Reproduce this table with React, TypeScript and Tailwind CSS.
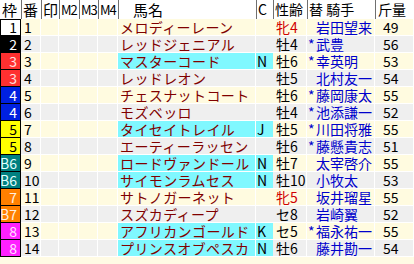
import React from 'react';

type Row = {
  waku: string;
  wc: string;
  num: number;
  name: string;
  c: string;
  sex: string;
  jockey: string;
  star: boolean;
  kg: string;
};

const WAKU: Record<string, string> = {
  white: 'bg-white text-black',
  black: 'bg-black text-white',
  red: 'bg-[#ff3030] text-[#ffe0e0]',
  blue: 'bg-[#0020e0] text-white',
  yellow: 'bg-[#ffff00] text-black',
  teal: 'bg-[#008080] text-[#e0ffff]',
  orange: 'bg-[#ff8000] text-[#fff0e0]',
  magenta: 'bg-[#ff20ff] text-[#ffe0ff]',
};

const rows: Row[] = [
  { waku: '1', wc: 'white', num: 1, name: 'メロディーレーン', c: '', sex: '牝4', jockey: '岩田望来', star: false, kg: '49' },
  { waku: '2', wc: 'black', num: 2, name: 'レッドジェニアル', c: '', sex: '牡4', jockey: '武豊', star: true, kg: '56' },
  { waku: '3', wc: 'red', num: 3, name: 'マスターコード', c: 'N', sex: '牡6', jockey: '幸英明', star: true, kg: '53' },
  { waku: '3', wc: 'red', num: 4, name: 'レッドレオン', c: '', sex: '牡5', jockey: '北村友一', star: false, kg: '54' },
  { waku: '4', wc: 'blue', num: 5, name: 'チェスナットコート', c: '', sex: '牡6', jockey: '藤岡康太', star: true, kg: '55' },
  { waku: '4', wc: 'blue', num: 6, name: 'モズベッロ', c: '', sex: '牡4', jockey: '池添謙一', star: true, kg: '52' },
  { waku: '5', wc: 'yellow', num: 7, name: 'タイセイトレイル', c: 'J', sex: '牡5', jockey: '川田将雅', star: true, kg: '55' },
  { waku: '5', wc: 'yellow', num: 8, name: 'エーティーラッセン', c: '', sex: '牡6', jockey: '藤懸貴志', star: true, kg: '51' },
  { waku: 'B6', wc: 'teal', num: 9, name: 'ロードヴァンドール', c: 'N', sex: '牡7', jockey: '太宰啓介', star: false, kg: '55' },
  { waku: 'B6', wc: 'teal', num: 10, name: 'サイモンラムセス', c: 'N', sex: '牡10', jockey: '小牧太', star: false, kg: '53' },
  { waku: '7', wc: 'orange', num: 11, name: 'サトノガーネット', c: '', sex: '牝5', jockey: '坂井瑠星', star: false, kg: '55' },
  { waku: 'B7', wc: 'orange', num: 12, name: 'スズカディープ', c: '', sex: 'セ8', jockey: '岩崎翼', star: false, kg: '52' },
  { waku: '8', wc: 'magenta', num: 13, name: 'アフリカンゴールド', c: 'K', sex: 'セ5', jockey: '福永祐一', star: true, kg: '55' },
  { waku: '8', wc: 'magenta', num: 14, name: 'プリンスオブペスカ', c: 'N', sex: '牡6', jockey: '藤井勘一', star: false, kg: '54' },
];

const COLS = 'grid grid-cols-[21px_20px_18px_20px_19px_20px_138px_17px_34px_68px_39px]';
const CYAN = 'bg-[#80f8ff]';
const HEAD = 'flex items-center border-l border-[#707070]';

const App: React.FC = () => {
  return (
    <div
      className="w-[414px] h-[264px] overflow-hidden bg-[#fffbe4] text-[14px] leading-[15px]"
      style={{ fontFamily: '"Noto Sans CJK JP", "Liberation Sans", sans-serif' }}
    >
      {/* ヘッダー */}
      <div className={`${COLS} h-[19px] bg-white text-black text-[15px]`}>
        <div className="flex items-center pl-[2px]">枠</div>
        <div className={`${HEAD} pl-[1px]`}>番</div>
        <div className={`${HEAD} pl-[1px]`}>印</div>
        <div className={`${HEAD} pl-[1px] text-[13px] tracking-[-1px]`}>M2</div>
        <div className={`${HEAD} pl-[1px] text-[13px] tracking-[-1px]`}>M3</div>
        <div className={`${HEAD} pl-[1px] text-[13px] tracking-[-1px]`}>M4</div>
        <div className={`${HEAD} pl-[14px]`}>馬名</div>
        <div className={`${HEAD} pl-[1px] text-[14px]`}>C</div>
        <div className={`${HEAD} pl-[1px] text-[14px]`}>性齢</div>
        <div className={`${HEAD} pl-[1px] text-[14px]`}>替 騎手</div>
        <div className={`${HEAD} pl-[2px] text-[14px]`}>斤量</div>
      </div>

      {rows.map((r, i) => {
        const bg = i % 2 === 0 ? 'bg-[#fffbe0]' : 'bg-[#efefef]';
        const cell = `h-[17px] flex items-center border-r border-b border-white ${bg}`;
        return (
          <div key={r.num} className={COLS}>
            <div
              className={`h-[17px] flex items-center justify-end pr-[3px] border-x border-b border-black ${i === 0 ? 'border-t' : ''} ${WAKU[r.wc]}`}
            >
              {r.waku}
            </div>
            <div className={`${cell} pl-[3px]`}>{r.num}</div>
            <div className={cell}></div>
            <div className={cell}></div>
            <div className={cell}></div>
            <div className={cell}></div>
            <div
              className={`h-[17px] flex items-center pl-[2px] border-r border-b border-white text-[#800000] tracking-[0.4px] whitespace-nowrap ${r.c ? CYAN : bg}`}
            >
              {r.name}
            </div>
            <div className={`h-[17px] flex items-center pl-[1px] border-b border-white text-black ${r.c ? CYAN : bg}`}>
              {r.c}
            </div>
            <div className={`${cell} pl-[3px] ${r.sex.startsWith('牝') ? 'text-[#d00000]' : 'text-black'}`}>
              {r.sex}
            </div>
            <div className={`${cell} text-[#0000cc] whitespace-nowrap`}>
              <span className="w-[9px] pl-[1px] shrink-0">{r.star ? '*' : ''}</span>
              {r.jockey}
            </div>
            <div className={`${cell} pl-[8px] text-black`}>{r.kg}</div>
          </div>
        );
      })}
    </div>
  );
};

export default App;
